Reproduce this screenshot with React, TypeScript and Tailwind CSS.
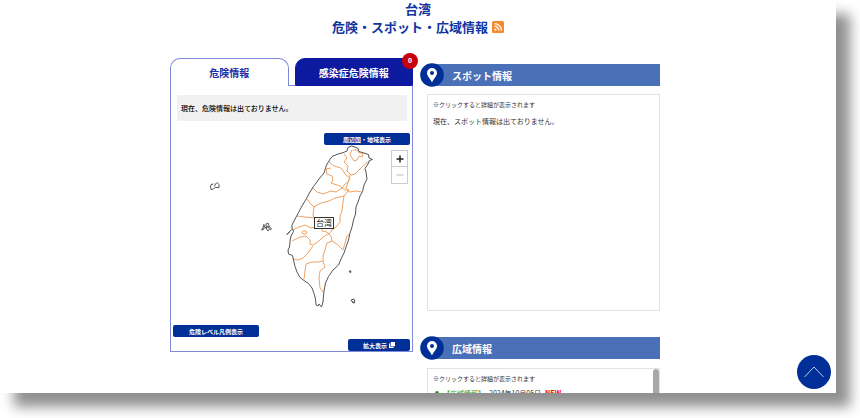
import React, { useState } from 'react';

type HazardTab = 'danger' | 'infection';

const COAST =
  'M351.5 146 L348 147.5 L347 151 L342 153 L338 154 L332 156.5 L329 161 L326.5 165 L324 173 L319 179 L313.5 186.5 L310 192 L306.5 198.5 L302 206 L298 213.5 L295 219 L292 225 L292 228 L293.5 231.5 L291 236 L290 241 L289.5 247 L288 250 L288.5 254 L292.5 255.5 L293.5 260 L295 266.5 L297 272 L300 277.5 L304 280.5 L308.5 283.5 L312 288 L314 293.5 L315.5 299 L316 305 L318 306 L319 304 L321.5 307 L323 302 L323.5 296 L324 291 L325.5 283 L328.5 276.5 L333 270 L338.5 265 L341 259 L344 253 L346 247 L348.5 240 L350 233 L352 227 L353.5 220 L355.5 214 L356 207 L358 202 L360 196 L362.5 191.5 L364 185 L367 179 L366 172 L365 168.5 L368 164 L369.5 160.5 L372.5 159.5 L369 158 L368.5 154.5 L364 153 L359 151.5 L358 148.5 L355 147 Z';

const COUNTY_LINES = [
  'M344 154 L347 158 L344 162 L348 166 L347 171 L351 175 L355 174 L363 166 L369 161',
  'M352 150 L350 154 L352 158 L354 161 L357 160 L359 156 L362 157 L363 153 L359 153 L357 150 L353 150',
  'M329 162 L334 166 L341 168 L346 175 L350 178 L348 182 L345 184 L342 188 L340 186 L334 184 L331 183 L333 180 L332 176 L327 174 L326 169 L331 168',
  'M312 187 L317 192 L323 194 L331 191 L336 192 L342 188',
  'M342 188 L346 190 L350 192 L355 191 L362 192',
  'M306 198 L310 203 L314 207 L321 203 L329 201 L335 198 L344 196 L349 190 L346 188 L349 180 L350 175',
  'M344 196 L343 202 L342 211 L340 216 L340 222 L336 227 L332 230 L329 234',
  'M314 207 L313 215 L315 219',
  'M297 216 L305 217 L315 218',
  'M293 230 L299 227 L305 225 L311 228 L319 226',
  'M302 232 L304 230.5 L307 232 L306 234 L303 234 Z',
  'M292 241 L300 237 L306 236 L310 240 L310 244 L313 245 L319 241 L323 237 L328 234 L329 234',
  'M322 227 L322 231 L327 232 L331 236 L332 241 L338 245 L343 250 L345 243 L347 236 L350 234',
  'M293 259 L298 260 L303 258 L308 253 L313 246',
  'M332 241 L327 243 L325 250 L323 256 L323 262 L325 267 L320 271 L319 278 L320 288 L323 292',
  'M304 279 L305 271 L306 264 L312 262 L318 262 L323 261',
];

const ISLANDS = [
  'M213.5 184 L211 184.5 L210.5 187 L211 189.5 L213.5 189 L215 187.5 L219 187.5 L219 184.5 L217 182.5 L215.5 184 L214.5 186.5',
  'M264 224 L263 228 L261.5 230 L263.5 229.5 L265 225 M266 224 L268 223 L269 225.5 L266.5 228 L266 224 M265 227 L268 231 L269.5 229 L268 226 L266 229 M269 226 L271.5 229 L270 230',
  'M349 271 L351 271 L350.5 273 Z',
  'M351 300 L354 299 L355 302 L353 303 L351 300 M352 301.5 L355 303',
  'M286.5 235 L288.5 233 L291.5 229.5 M287 234 L290 231.5',
];

const TaiwanMap: React.FC = () => (
  <svg className="block w-full" viewBox="171 126 241 225" role="img" aria-label="台湾の地図">
    <g fill="none" stroke="#f0a263" strokeWidth="1" strokeLinejoin="round">
      {COUNTY_LINES.map(d => <path key={d} d={d} />)}
    </g>
    <g fill="none" stroke="#555" strokeWidth="1" strokeLinejoin="round">
      <path d={COAST} />
      {ISLANDS.map(d => <path key={d} d={d} />)}
    </g>
    <rect x="314.5" y="217.5" width="19" height="11" fill="#fff" stroke="#333" />
    <text x="324" y="226" textAnchor="middle" fontSize="8" fill="#222">台湾</text>
  </svg>
);

const RssIcon: React.FC = () => (
  <svg className="h-3 w-3" viewBox="0 0 12 12" aria-hidden="true">
    <rect width="12" height="12" rx="1.5" fill="#f58a2c" />
    <circle cx="3.4" cy="8.7" r="1.1" fill="#fff" />
    <path d="M2.4 5.2a4.4 4.4 0 0 1 4.4 4.4M2.4 2.6a7 7 0 0 1 7 7" fill="none" stroke="#fff" strokeWidth="1.3" />
  </svg>
);

const PinBadge: React.FC = () => (
  <svg className="relative z-10 h-6 w-6 shrink-0" viewBox="0 0 24 24" aria-hidden="true">
    <circle cx="12" cy="12" r="11.8" fill="#002f98" />
    <path
      d="M12 5a5 5 0 0 0-5 5c0 3.3 3.2 5.4 5 9.5c1.8-4.1 5-6.2 5-9.5a5 5 0 0 0-5-5zm0 3.1a2 2 0 1 1 0 4a2 2 0 0 1 0-4z"
      fill="#fff"
      fillRule="evenodd"
    />
  </svg>
);

const SectionHeading: React.FC<{ title: string }> = ({ title }) => (
  <div className="flex h-6 items-center">
    <PinBadge />
    <h2 className="-ml-3 flex h-[22px] flex-1 items-center bg-[#4a70b8] pl-5 text-[10px] font-bold text-white">
      {title}
    </h2>
  </div>
);

const MapButton: React.FC<{ className: string; children: React.ReactNode }> = ({ className, children }) => (
  <button
    type="button"
    className={`absolute flex h-3 items-center justify-center gap-0.5 rounded-xs bg-[#002f98] text-[6px] font-bold text-white ${className}`}
  >
    {children}
  </button>
);

const HazardPanel: React.FC = () => {
  const [tab, setTab] = useState<HazardTab>('danger');
  const active = 'border border-b-0 border-[#7f8bd8] bg-white text-[#1c2ea4]';
  const inactive = 'border border-[#0b1a9e] bg-[#0b1a9e] text-white';

  return (
    <section className="flex min-w-0 flex-col">
      <div className="flex h-7" role="tablist">
        <button
          type="button"
          role="tab"
          aria-selected={tab === 'danger'}
          onClick={() => setTab('danger')}
          className={`flex-1 rounded-t-[10px] text-[10px] font-bold ${tab === 'danger' ? active : inactive}`}
        >
          危険情報
        </button>
        <span className="w-1.5 border-b border-[#7f8bd8]" />
        <button
          type="button"
          role="tab"
          aria-selected={tab === 'infection'}
          onClick={() => setTab('infection')}
          className={`relative flex-1 rounded-tl-[10px] text-[10px] font-bold ${tab === 'infection' ? active : inactive}`}
        >
          感染症危険情報
          <span className="absolute -top-1.5 -right-1.5 flex h-4 w-4 items-center justify-center rounded-full bg-[#c8000c] font-['Open_Sans',sans-serif] text-[7px] font-bold text-white">
            0
          </span>
        </button>
      </div>
      <div className="border border-t-0 border-[#7f8bd8] pt-[9px]">
        <p className="mr-[5px] ml-1.5 bg-[#f1f1f1] px-1 py-2 text-[7px] leading-[10px] font-medium text-black">
          現在、危険情報は出ておりません。
        </p>
        <div className="relative mt-[5px]">
          <TaiwanMap />
          <MapButton className="top-[7px] right-0.5 w-[86px]">周辺国・地域表示</MapButton>
          <div className="absolute top-6 right-1 flex w-[17px] flex-col divide-y divide-[#ccc] border border-[#ccc] bg-white">
            <button type="button" aria-label="拡大" className="flex h-4 items-center justify-center">
              <svg className="h-2 w-2" viewBox="0 0 8 8" stroke="#222" strokeWidth="1.5">
                <path d="M4 .5v7M.5 4h7" />
              </svg>
            </button>
            <button type="button" aria-label="縮小" className="flex h-4 items-center justify-center">
              <svg className="h-2 w-2" viewBox="0 0 8 8" stroke="#bbb">
                <path d="M.5 4h7" />
              </svg>
            </button>
          </div>
          <MapButton className="bottom-3.5 left-0.5 w-[86px]">危険レベル凡例表示</MapButton>
          <MapButton className="right-0.5 bottom-0 w-[62px]">
            拡大表示
            <svg className="h-1.5 w-1.5" viewBox="0 0 6 6" aria-hidden="true">
              <path d="M1.800 0h4.200v4.200h-4.200zM0 1.500h1.200v3.300h3.300v1.200h-4.500z" fill="#fff" />
            </svg>
          </MapButton>
        </div>
      </div>
    </section>
  );
};

const ClickNote: React.FC = () => (
  <p className="text-[6px] leading-[8px] text-[#333]">※クリックすると詳細が表示されます</p>
);

const App: React.FC = () => (
  <div className="h-screen overflow-hidden bg-white pr-6 pb-[25px] font-['Noto_Sans_CJK_JP',sans-serif]">
    <div className="relative h-full overflow-clip bg-white shadow-[14px_14px_12px_#909090]">
      <main className="mx-auto w-full max-w-[496px]">
        <h1 className="text-center text-[13px] leading-[18px] font-bold text-[#1034a0]">
          台湾
          <span className="flex items-center justify-center gap-1">
            危険・スポット・広域情報
            <a href="#rss" aria-label="RSS">
              <RssIcon />
            </a>
          </span>
        </h1>
        <div className="mt-[22px] grid grid-cols-[243fr_240fr] items-start gap-[7px] pr-1.5">
          <HazardPanel />
          <div className="flex min-w-0 flex-col pt-[5px]">
            <section>
              <SectionHeading title="スポット情報" />
              <div className="mt-[7px] ml-[7px] h-[217px] border border-[#e2e2e2] px-[5px] py-1.5">
                <ClickNote />
                <p className="mt-1.5 text-[7px] leading-[12px] text-[#333]">現在、スポット情報は出ておりません。</p>
              </div>
            </section>
            <section className="mt-[25px]">
              <SectionHeading title="広域情報" />
              <div className="mt-2 ml-[7px] flex h-[217px] justify-between border border-[#e2e2e2]">
                <div className="px-[5px] py-1.5">
                  <ClickNote />
                  <ul className="mt-1">
                    <li className="flex items-center gap-1 text-[7px] leading-[12px] text-[#333]">
                      <span className="ml-0.5 h-1 w-1 rounded-full bg-[#2f9a1c]" />
                      <a href="#area" className="text-[#3a9a20]">【広域情報】</a>
                      <span>2024年10月05日</span>
                      <strong className="text-[#f00]">NEW</strong>
                    </li>
                  </ul>
                </div>
                <div className="h-16 w-1.5 rounded-full bg-[#a8a8a8]" />
              </div>
            </section>
          </div>
        </div>
      </main>
      <a
        href="#top"
        aria-label="ページの先頭へ"
        className="absolute right-[5px] bottom-1 flex h-[34px] w-[34px] items-center justify-center rounded-full bg-[#002f98]"
      >
        <svg className="h-3 w-5" viewBox="0 0 20 12" fill="none" stroke="#b9c8ea" strokeWidth="1">
          <path d="M.5 11 L10 1 L19.5 11" />
        </svg>
      </a>
    </div>
  </div>
);

export default App;
